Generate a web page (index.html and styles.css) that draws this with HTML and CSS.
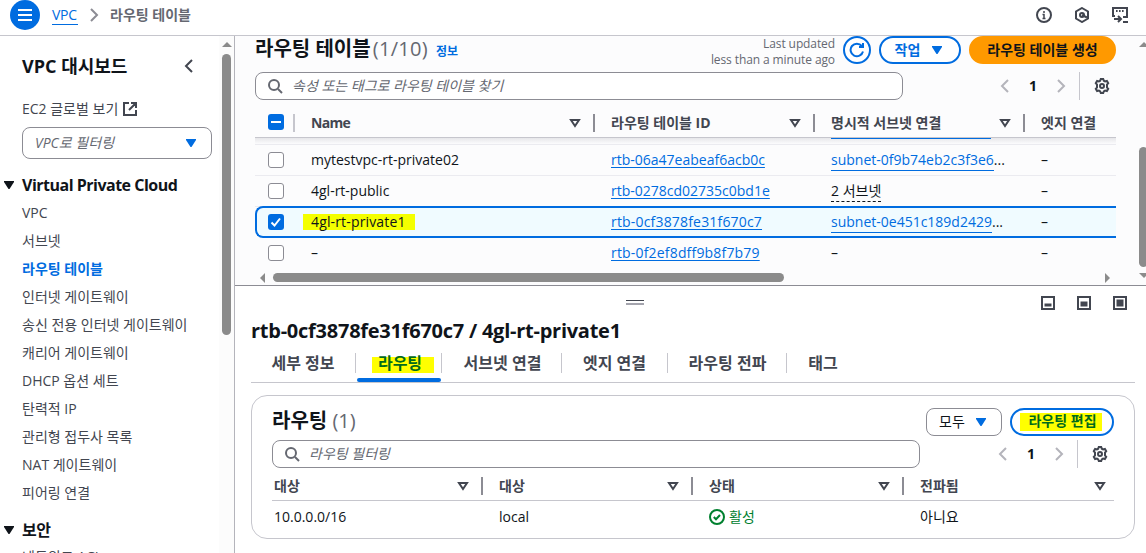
FILE: index.html
```html
<!DOCTYPE html>
<html lang="ko">
<head>
  <meta charset="UTF-8">
  <meta name="viewport" content="width=device-width, initial-scale=1.0">
  <title>라우팅 테이블 | VPC Console</title>
  <link rel="stylesheet" href="styles.css">
</head>
<body>
  <!-- Shared icons -->
  <svg class="icon-defs" width="0" height="0">
    <symbol id="search" viewBox="0 0 16 16"><circle cx="7" cy="7" r="5" /><path d="M11 11l4 4" /></symbol>
    <symbol id="left" viewBox="0 0 16 16"><path d="M11 2L5 8l6 6" /></symbol>
    <symbol id="right" viewBox="0 0 16 16"><path d="M5 2l6 6-6 6" /></symbol>
    <symbol id="down" viewBox="0 0 16 16"><path class="solid" d="M3 4h10v1L8.500 12h-1L3 5z" /></symbol>
    <symbol id="sort" viewBox="0 0 16 16"><path d="M4 5h8L8 11z" /></symbol>
    <symbol id="gear" viewBox="0 0 16 16">
      <path d="M6.200 2.700L6.800 1h2.400l.6 1.700 1.300.7 1.800-.4 1.300 2.100-1.200 1.400v2.900l1.200 1.500-1.300 2.100-1.800-.4-1.300.8-.6 1.600H6.800l-.6-1.600-1.300-.8-1.800.4-1.300-2.100L3 9.400V6.500L1.800 5.100 3.100 3l1.800.4z" />
      <circle cx="8" cy="8" r="2" />
    </symbol>
  </svg>

  <header class="topbar">
    <button class="menu-btn" aria-label="menu">
      <svg width="16" height="14" viewBox="0 0 16 14"><path d="M1 2h14M1 7h14M1 12h14" /></svg>
    </button>
    <a class="crumb-link" href="#">VPC</a>
    <svg class="icon crumb-sep"><use href="#right" /></svg>
    <span class="crumb-current">라우팅 테이블</span>
    <div class="topbar-icons">
      <svg class="icon" viewBox="0 0 16 16"><circle cx="8" cy="8" r="7" /><path d="M8 7v5M8 4v2M6.500 11.500h3M6.500 7.500h2" stroke-width="1.500" /></svg>
      <svg class="icon" viewBox="0 0 16 16"><path d="M8 1l6 3.500v7L8 15l-6-3.500v-7z" /><circle cx="8" cy="8" r="2" /><path d="M8 8l5 2.500" /></svg>
      <svg class="icon" viewBox="0 0 16 16"><path d="M3 9H1V1h14v9h-4M2 12h7M6 9l3 3-3 3M11 15h5" /><path d="M4 4h8" stroke-dasharray="1.600 1.400" /></svg>
    </div>
  </header>

  <div class="layout">
    <!-- Side navigation -->
    <nav class="sidebar">
      <div class="nav-content">
        <div class="nav-title">
          <span>VPC 대시보드</span>
          <svg class="icon"><use href="#left" /></svg>
        </div>
        <a class="nav-external" href="#">EC2 글로벌 보기
          <svg class="icon" viewBox="0 0 16 16"><path d="M7 2H2v12h12V9M9 2h5v5M14 2L7 9" /></svg>
        </a>
        <div class="nav-select"><em>VPC로 필터링</em><svg class="icon blue"><use href="#down" /></svg></div>
        <h3><svg class="icon"><use href="#down" /></svg>Virtual Private Cloud</h3>
        <ul>
          <li>VPC</li>
          <li>서브넷</li>
          <li class="active">라우팅 테이블</li>
          <li>인터넷 게이트웨이</li>
          <li>송신 전용 인터넷 게이트웨이</li>
          <li>캐리어 게이트웨이</li>
          <li>DHCP 옵션 세트</li>
          <li>탄력적 IP</li>
          <li>관리형 접두사 목록</li>
          <li>NAT 게이트웨이</li>
          <li>피어링 연결</li>
        </ul>
        <h3 class="security"><svg class="icon"><use href="#down" /></svg>보안</h3>
        <ul>
          <li>네트워크 ACL</li>
        </ul>
      </div>
      <div class="nav-scroll">
        <i class="arrow up"></i>
        <div class="thumb"></div>
      </div>
    </nav>

    <main>
      <!-- Route table list -->
      <section class="list-panel">
        <div class="list-body">
          <div class="list-header">
            <h1>라우팅 테이블 <span class="count total">(1/10)</span></h1>
            <a class="info" href="#">정보</a>
            <p class="updated">Last updated<br>less than a minute ago</p>
            <button class="btn refresh" aria-label="refresh">
              <svg class="icon" viewBox="0 0 16 16"><path d="M14 9.500A6.300 6.300 0 1 1 12.800 4M10 5h4V1" /></svg>
            </button>
            <button class="btn actions">작업 <svg class="icon"><use href="#down" /></svg></button>
            <button class="btn primary">라우팅 테이블 생성</button>
          </div>
          <div class="tools">
            <div class="search"><svg class="icon"><use href="#search" /></svg><em>속성 또는 태그로 라우팅 테이블 찾기</em></div>
            <div class="pager">
              <svg class="icon muted"><use href="#left" /></svg><b>1</b><svg class="icon muted"><use href="#right" /></svg>
              <span class="settings"><svg class="icon"><use href="#gear" /></svg></span>
            </div>
          </div>
          <div class="row head">
            <div class="check-cell"><span class="check on"><svg viewBox="0 0 16 16"><path d="M3 8h10" /></svg></span></div>
            <div><span class="name">Name</span><svg class="icon"><use href="#sort" /></svg></div>
            <div>라우팅 테이블 ID<svg class="icon"><use href="#sort" /></svg></div>
            <div>명시적 서브넷 연결<svg class="icon"><use href="#sort" /></svg></div>
            <div>엣지 연결</div>
          </div>
          <div class="head-shadow"></div>
          <div class="row">
            <div class="check-cell"><span class="check"></span></div>
            <div>mytestvpc-rt-private02</div>
            <div><a href="#">rtb-06a47eabeaf6acb0c</a></div>
            <div><a class="low" href="#">subnet-0f9b74eb2c3f3e6</a>...</div>
            <div>–</div>
          </div>
          <div class="row">
            <div class="check-cell"><span class="check"></span></div>
            <div>4gl-rt-public</div>
            <div><a href="#">rtb-0278cd02735c0bd1e</a></div>
            <div><span class="dashed">2 서브넷</span></div>
            <div>–</div>
          </div>
          <div class="row selected">
            <div class="check-cell"><span class="check on"><svg viewBox="0 0 16 16"><path d="M3.500 8.500l3 3L12 4.500" /></svg></span></div>
            <div><mark>4gl-rt-private1</mark></div>
            <div><a class="wide" href="#">rtb-0cf3878fe31f670c7</a></div>
            <div><a class="low" href="#">subnet-0e451c189d2429</a>...</div>
            <div>–</div>
          </div>
          <div class="row last">
            <div class="check-cell"><span class="check"></span></div>
            <div>–</div>
            <div><a class="wide" href="#">rtb-0f2ef8dff9b8f7b79</a></div>
            <div>–</div>
            <div>–</div>
          </div>
          <div class="h-scroll"><i class="arrow left"></i><div class="thumb"></div><i class="arrow right"></i></div>
        </div>
        <div class="v-scroll"><i class="arrow up"></i><div class="thumb"></div><i class="arrow down"></i></div>
      </section>

      <!-- Split panel with the details of the selected table -->
      <section class="detail-panel">
        <div class="panel-bar">
          <div class="handle"></div>
          <div class="panel-sizes">
            <svg viewBox="0 0 14 14"><path d="M1 1h12v12H1z" /><path class="fill" d="M3 7h8v4H3z" /></svg>
            <svg viewBox="0 0 14 14"><path d="M1 1h12v12H1z" /><path class="fill" d="M3 5h8v6H3z" /></svg>
            <svg viewBox="0 0 14 14"><path d="M1 1h12v12H1z" /><path class="fill" d="M3 3h8v8H3z" /></svg>
          </div>
        </div>
        <h2>rtb-0cf3878fe31f670c7 / 4gl-rt-private1</h2>
        <div class="tabs">
          <div class="tab details">세부 정보</div>
          <div class="tab routes"><mark>라우팅</mark></div>
          <div class="tab subnets">서브넷 연결</div>
          <div class="tab edges">엣지 연결</div>
          <div class="tab propagation">라우팅 전파</div>
          <div class="tab tags">태그</div>
        </div>
        <div class="card">
          <div class="card-header">
            <h1>라우팅 <span class="count">(1)</span></h1>
            <div class="select">모두 <svg class="icon blue"><use href="#down" /></svg></div>
            <button class="btn edit"><mark>라우팅 편집</mark></button>
          </div>
          <div class="tools">
            <div class="search"><svg class="icon"><use href="#search" /></svg><em>라우팅 필터링</em></div>
            <div class="pager">
              <svg class="icon muted"><use href="#left" /></svg><b>1</b><svg class="icon muted"><use href="#right" /></svg>
              <span class="settings"><svg class="icon"><use href="#gear" /></svg></span>
            </div>
          </div>
          <div class="route head">
            <div>대상<svg class="icon"><use href="#sort" /></svg></div>
            <div>대상<svg class="icon"><use href="#sort" /></svg></div>
            <div>상태<svg class="icon"><use href="#sort" /></svg></div>
            <div>전파됨<svg class="icon"><use href="#sort" /></svg></div>
          </div>
          <div class="route">
            <div>10.0.0.0/16</div>
            <div>local</div>
            <div class="status"><svg class="icon" viewBox="0 0 16 16"><circle cx="8" cy="8" r="7" /><path d="M4.800 8l2.200 2.300 4-4.300" /></svg>활성</div>
            <div>아니요</div>
          </div>
        </div>
      </section>
    </main>
  </div>
</body>
</html>
```
FILE: styles.css
```css
* {
  box-sizing: border-box;
}

body {
  margin: 0;
  height: 553px;
  overflow: hidden;
  background-color: #fff;
  color: #0f141a;
  font-family: "Open Sans", "Noto Sans CJK KR", sans-serif;
  font-size: 14px;
  line-height: 20px;
}

h1, h2, h3, p, ul {
  margin: 0;
  padding: 0;
}

a {
  color: #006ce0;
}

mark {
  background-color: #f4ff00;
  color: inherit;
}

/* Icons */
.icon-defs {
  position: absolute;
}

.icon {
  width: 16px;
  height: 16px;
  flex: none;
  fill: none;
  stroke: #424650;
  stroke-width: 2;
  color: #0f141a;
}

.solid {
  fill: currentColor;
  stroke: none;
}

.blue {
  color: #006ce0;
}

.muted {
  stroke: #b4b4bb;
}

/* Top bar */
.topbar {
  display: flex;
  align-items: center;
  height: 36px;
  padding: 0 18px 5px 10px;
  border-bottom: 1px solid #c6c6cd;
}

.menu-btn {
  display: flex;
  align-items: center;
  justify-content: center;
  width: 30px;
  height: 30px;
  padding: 0;
  border: none;
  border-radius: 50%;
  background-color: #006ce0;
}

.menu-btn svg {
  fill: none;
  stroke: #fff;
  stroke-width: 2;
}

.crumb-link {
  margin-left: 12px;
  width: 26px;
  height: 20px;
  text-decoration: none;
  border-bottom: 1px solid #006ce0;
  letter-spacing: -0.3px;
}

.crumb-sep {
  margin: 0 8px;
  stroke: #8c8c94;
}

.crumb-current {
  height: 21px;
  color: #656871;
  font-weight: bold;
}

.topbar-icons {
  display: flex;
  gap: 22px;
  margin-left: auto;
}

/* Side navigation */
.layout {
  display: flex;
  height: 517px;
}

.sidebar {
  display: flex;
  width: 235px;
  border-right: 1px solid #b4b4bb;
}

.nav-content {
  width: 219px;
  height: 517px;
  padding: 18px 7px 0 22px;
  overflow: hidden;
}

.nav-title {
  display: flex;
  align-items: center;
  justify-content: space-between;
  height: 24px;
  padding-right: 15px;
  font-size: 18px;
  font-weight: bold;
}

.nav-external {
  display: flex;
  align-items: center;
  gap: 4px;
  height: 20px;
  margin-top: 21px;
  color: #424650;
  text-decoration: none;
}

.nav-select {
  display: flex;
  align-items: center;
  justify-content: space-between;
  height: 32px;
  margin-top: 8px;
  padding: 0 12px;
  border: 1px solid #8c8c94;
  border-radius: 8px;
  color: #656871;
}

.nav-content h3 {
  display: flex;
  align-items: center;
  gap: 5px;
  height: 20px;
  margin: 16px 0 4px -21px;
  font-size: 16px;
  font-weight: bold;
  letter-spacing: -0.5px;
}

.nav-content .security {
  margin: 13px 0 3px -21px;
}

.nav-content ul {
  list-style: none;
}

.nav-content li {
  height: 28px;
  line-height: 28px;
  color: #424650;
}

.nav-content .active {
  color: #006ce0;
  font-weight: bold;
}

/* Scrollbars */
.arrow {
  width: 0;
  height: 0;
  border: 5px solid transparent;
}

.arrow.up {
  border-top: none;
  border-bottom-color: #8b8b8b;
}

.arrow.down {
  border-bottom: none;
  border-top-color: #8b8b8b;
}

.arrow.left {
  border-left: none;
  border-right-color: #8b8b8b;
}

.arrow.right {
  border-right: none;
  border-left-color: #8b8b8b;
}

.thumb {
  border-radius: 5px;
  background-color: #8b8b8b;
}

.nav-scroll {
  width: 15px;
  padding: 6px 3px 0 3px;
  background-color: #fcfcfc;
}

.nav-scroll .arrow {
  display: block;
}

.nav-scroll .thumb {
  width: 9px;
  height: 281px;
  margin-top: 7px;
}

/* Route table list */
main {
  flex: 1;
  min-width: 0;
}

.list-panel {
  display: flex;
  height: 250px;
  background-color: #fcfcfd;
  border-bottom: 1px solid #8c8c94;
}

.list-body {
  width: 881px;
  margin-left: 20px;
}

.list-header, .card-header {
  display: flex;
  align-items: center;
  height: 28px;
}

h1 {
  height: 26px;
  font-size: 20px;
  line-height: 24px;
  white-space: nowrap;
}

.count {
  color: #656871;
  font-weight: normal;
}

.total {
  margin-left: -3px;
  letter-spacing: 0.3px;
}

.info {
  margin: 3px 0 0 8px;
  font-size: 12px;
  font-weight: bold;
  text-decoration: none;
}

.updated {
  margin: 4px 8px 0 auto;
  color: #656871;
  font-size: 12px;
  line-height: 16px;
  letter-spacing: -0.1px;
  text-align: right;
}

.btn {
  display: flex;
  align-items: center;
  justify-content: center;
  height: 28px;
  padding: 0;
  border: 2px solid #006ce0;
  border-radius: 20px;
  background-color: #fff;
  color: #006ce0;
  font: inherit;
  font-weight: bold;
}

.btn .icon {
  stroke: #006ce0;
  color: #006ce0;
}

.refresh {
  width: 28px;
}

.actions {
  width: 82px;
  margin: 0 8px;
  gap: 9px;
}

.primary {
  width: 147px;
  border-color: #ff9900;
  background-color: #ff9900;
  color: #0f141a;
}

.tools {
  display: flex;
  justify-content: space-between;
  height: 28px;
  margin-top: 8px;
}

.card .tools {
  margin-top: 4px;
}

.search {
  display: flex;
  align-items: center;
  gap: 9px;
  width: 648px;
  padding-left: 11px;
  border: 1px solid #8c8c94;
  border-radius: 8px;
  background-color: #fff;
  color: #656871;
}

.search .icon {
  stroke: #656871;
}

.pager {
  display: flex;
  align-items: center;
}

.pager b {
  width: 40px;
  text-align: center;
}

.settings {
  display: flex;
  align-items: center;
  height: 28px;
  margin-left: 10px;
  padding: 0 6px 0 14px;
  border-left: 1px solid #c6c6cd;
}

.row {
  display: grid;
  grid-template-columns: 40px 300px 220px 210px 91px;
  width: 861px;
  height: 31px;
  border-bottom: 1px solid #ebebf0;
}

.list-header, .list-body .tools {
  width: 861px;
}

.row > div {
  display: flex;
  align-items: center;
  padding-left: 16px;
  white-space: nowrap;
}

.row > .check-cell {
  padding-left: 13px;
}

.row a {
  letter-spacing: 0;
  text-underline-offset: 2px;
}

.row .wide {
  letter-spacing: 0.18px;
}

.row .low {
  text-decoration: none;
  border-bottom: 1px solid #006ce0;
}

.dashed {
  border-bottom: 1px dashed #0f141a;
}

.head {
  color: #424650;
  font-weight: bold;
}

.name {
  letter-spacing: -0.7px;
}

.row.head {
  height: 38px;
  padding: 7px 0 5px;
  border-color: #c6c6cd;
}

.head > div {
  justify-content: space-between;
}

.row.head > div {
  height: 18px;
  margin-top: 7px;
}

.row.head > div:not(:last-child) {
  padding-right: 10px;
  border-right: 2px solid #8c8c94;
}

.row.head > .check-cell:not(:last-child) {
  padding-right: 0;
  border-right-color: #c6c6cd;
}

.head-shadow {
  width: 861px;
  height: 7px;
  border-bottom: 1px solid #ebebf0;
  background: linear-gradient(#e7e7ea, #fcfcfd);
}

.head-shadow::before {
  content: "";
  display: block;
  width: 160px;
  height: 1px;
  margin-left: 576px;
  background-color: #006ce0;
}

.check {
  display: block;
  flex: none;
  width: 16px;
  height: 16px;
  border: 1px solid #8c8c94;
  border-radius: 3px;
  background-color: #fff;
}

.check.on {
  border: none;
  background-color: #006ce0;
}

.row.head .check {
  margin-top: -2px;
}

.check svg {
  display: block;
  fill: none;
  stroke: #fff;
  stroke-width: 2;
}

.row.selected {
  height: 32px;
  margin-top: -1px;
  border: 2px solid #006ce0;
  border-right: none;
  border-radius: 8px 0 0 8px;
  background-color: #f0fbff;
  grid-template-columns: 38px 300px 220px 210px 91px;
}

.row.selected > .check-cell {
  padding-left: 11px;
}

.row mark {
  width: 112px;
  height: 16px;
  margin-left: -8px;
  padding: 0 8px;
  line-height: 16px;
  letter-spacing: 0.15px;
}

.row.last {
  height: 30px;
  border: none;
}

.h-scroll {
  display: flex;
  align-items: center;
  width: 861px;
  height: 9px;
  margin-top: 5px;
  padding: 0 6px 0 5px;
}

.h-scroll .thumb {
  width: 511px;
  height: 9px;
  margin: 0 auto 0 8px;
}

.v-scroll {
  display: flex;
  flex-direction: column;
  width: 10px;
  padding: 6px 0 0 3px;
}

.v-scroll .thumb {
  width: 9px;
  height: 120px;
  margin: 100px 0 6px;
}

/* Detail panel */
.detail-panel {
  padding: 0 11px 0 16px;
}

.panel-bar {
  display: flex;
  height: 32px;
  padding: 10px 8px 0 375px;
}

.handle {
  width: 18px;
  height: 5px;
  margin-top: 4px;
  border-top: 1px solid #424650;
  border-bottom: 2px solid #a4a4ad;
}

.panel-sizes {
  display: flex;
  gap: 22px;
  margin-left: auto;
}

.panel-sizes svg {
  width: 14px;
  height: 14px;
  fill: none;
  stroke: #424650;
  stroke-width: 2;
}

.panel-sizes .fill {
  fill: #424650;
  stroke: #fff;
  stroke-width: 1;
}

h2 {
  height: 28px;
  font-size: 20px;
  line-height: 26px;
  letter-spacing: -0.25px;
}

.tabs {
  display: flex;
  height: 37px;
  border-bottom: 1px solid #c6c6cd;
  color: #424650;
  font-size: 16px;
  font-weight: bold;
}

.tab {
  height: 20px;
  margin-top: 7px;
  border-right: 1px solid #c6c6cd;
  text-align: center;
  white-space: nowrap;
}

.details {
  width: 105px;
}

.routes {
  position: relative;
  width: 86px;
  color: #006a1c;
}

.routes::after {
  content: "";
  position: absolute;
  left: 1px;
  bottom: -9px;
  width: 84px;
  height: 4px;
  border-radius: 2px;
  background-color: #006ce0;
}

.routes mark {
  display: block;
  width: 62px;
  height: 16px;
  margin: 4px 0 0 16px;
  padding-right: 6px;
  line-height: 12px;
  background-color: #ffff00;
}

.subnets {
  width: 120px;
  padding-left: 2px;
}

.edges {
  width: 106px;
}

.propagation {
  width: 119px;
  padding-left: 1px;
}

.tags {
  width: 72px;
  border: none;
}

.card {
  height: 144px;
  margin-top: 12px;
  padding: 12px 20px;
  border: 1px solid #c6c6cd;
  border-radius: 16px;
}

.select {
  display: flex;
  align-items: center;
  gap: 8px;
  width: 76px;
  height: 28px;
  margin: 0 8px 0 auto;
  padding-left: 12px;
  border: 1px solid #8c8c94;
  border-radius: 8px;
}

.edit {
  width: 104px;
  color: #006a1c;
}

.edit mark {
  height: 18px;
  margin-right: 2px;
  padding: 0 5px 0 8px;
  line-height: 16px;
  background-color: #ffff00;
}

.route {
  display: grid;
  grid-template-columns: 211px 210px 211px 210px;
  height: 32px;
}

.route > div {
  display: flex;
  align-items: center;
  padding-left: 16px;
}

.route > div:first-child {
  padding-left: 2px;
}

.route.head {
  height: 33px;
  border-bottom: 1px solid #c6c6cd;
}

.route.head > div {
  height: 18px;
  margin-top: 9px;
  padding-right: 10px;
  border-right: 2px solid #8c8c94;
}

.route.head > div:last-child {
  padding-right: 6px;
  border: none;
}

.route .status {
  gap: 4px;
  color: #00802f;
}

.status .icon {
  stroke: #00802f;
}
```
